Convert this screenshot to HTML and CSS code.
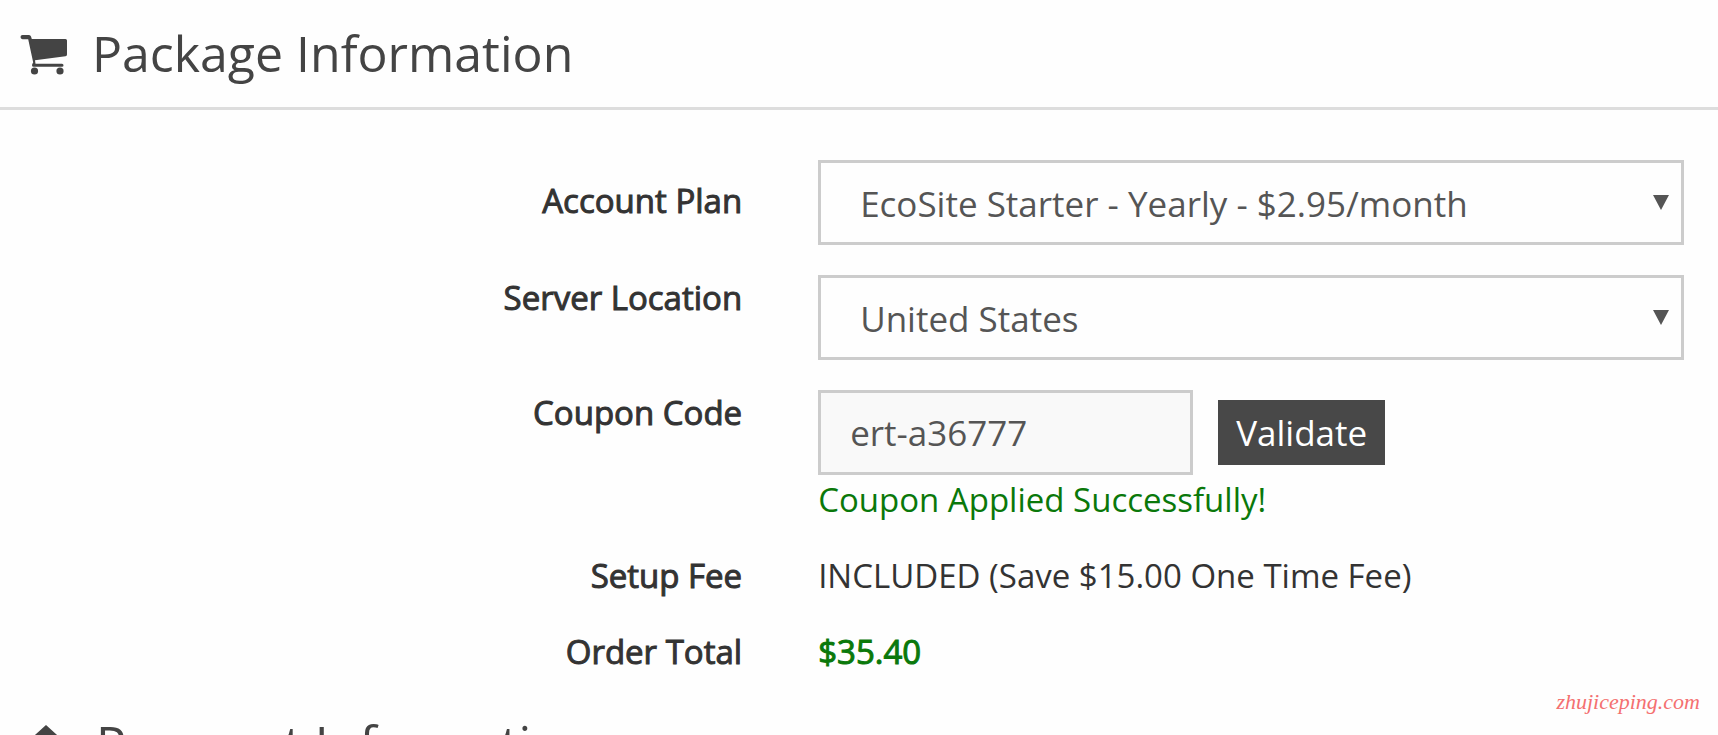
FILE: index.html
```
<!DOCTYPE html>
<html lang="en">
<head>
<meta charset="utf-8">
<title>Package Information</title>
<link rel="stylesheet" href="styles.css">
</head>
<body>
<section>
  <h2 class="heading heading-first">
    <svg class="heading-icon" viewBox="0 0 48 40" aria-hidden="true">
      <path d="M2.500 0H9Q10.500 0 11 1.500L11.800 4H45.500Q47 4 47 5.500V19.500Q47 21 45.500 21.200L15 25.200L15.500 28.700H42Q43.500 28.700 43.500 30.200T42 31.800H13.500Q12 31.800 12 30.300Q12 29 13.200 27.500L8.200 4.200H2.500Q.5 4.200 .5 2.100T2.500 0Z"/>
      <circle cx="14.500" cy="36" r="3.600"/><circle cx="40" cy="36" r="3.600"/>
    </svg>
    Package Information
  </h2>
  <form class="form" onsubmit="return false">
    <div class="row">
      <label class="label label-first" for="plan">Account Plan</label>
      <div class="select-wrap">
        <select class="field" id="plan"><option>EcoSite Starter - Yearly - $2.95/month</option></select>
        <svg class="arrow" viewBox="0 0 16 15" aria-hidden="true"><path d="M0 0H16L8 15Z"/></svg>
      </div>
    </div>
    <div class="row">
      <label class="label" for="location">Server Location</label>
      <div class="select-wrap">
        <select class="field" id="location"><option>United States</option></select>
        <svg class="arrow" viewBox="0 0 16 15" aria-hidden="true"><path d="M0 0H16L8 15Z"/></svg>
      </div>
    </div>
    <div class="row">
      <label class="label" for="coupon">Coupon Code</label>
      <div>
        <div class="coupon">
          <input class="field coupon-input" id="coupon" type="text" value="ert-a36777">
          <button class="button" type="button">Validate</button>
        </div>
        <p class="message">Coupon Applied Successfully!</p>
      </div>
    </div>
    <div class="row">
      <span class="label">Setup Fee</span>
      <span>INCLUDED (Save $15.00 One Time Fee)</span>
    </div>
    <div class="row">
      <span class="label">Order Total</span>
      <output class="total">$35.40</output>
    </div>
  </form>
</section>
<section>
  <h2 class="heading heading-next">
    <svg class="heading-icon" viewBox="0 0 48 40" aria-hidden="true">
      <path d="M26 0L47 19H41V40H30V27H22V40H11V19H5Z"/>
    </svg>
    Payment Information
  </h2>
</section>
<div class="watermark">zhujiceping.com</div>
</body>
</html>
```
FILE: styles.css
```
* { box-sizing: border-box; }
html { overflow: hidden; }
body {
  margin: 0;
  height: 100vh;
  overflow: hidden;
  background: #fefefe;
  color: #333;
  font: 33px/46px "Open Sans", sans-serif;
}
.heading {
  display: flex;
  align-items: center;
  gap: 24px;
  margin: 0;
  padding: 19px 20px 20px;
  border-bottom: 3px solid #ddd;
  color: #444;
  font-size: 50px;
  line-height: 68px;
  font-weight: 400;
}
.heading-next { padding: 34px 20px 20px; gap: 28px; }
.heading-icon { width: 48px; height: 40px; fill: #444; margin-top: 4px; }
.form {
  display: grid;
  gap: 30px;
  padding: 50px 34px 0 0;
}
.row {
  display: grid;
  grid-template-columns: minmax(0, 6fr) minmax(0, 7fr);
  column-gap: 76px;
}
.label { text-align: right; -webkit-text-stroke: 1px currentColor; }
.label-first { padding-top: 18px; }
.select-wrap { position: relative; }
.field {
  display: block;
  width: 100%;
  height: 85px;
  margin: 0;
  padding: 2px 39px 0;
  border: 3px solid #ccc;
  border-radius: 0;
  background: #fefefe;
  color: #555;
  font: 35px/48px "Open Sans", sans-serif;
  appearance: none;
}
.arrow {
  position: absolute;
  top: 35px;
  right: 15px;
  width: 16px;
  height: 15px;
  fill: #555;
  pointer-events: none;
}
.coupon { display: flex; align-items: center; gap: 25px; }
.coupon-input { width: 375px; padding: 0 29px; background: #f9f9f9; }
.button {
  height: 65px;
  padding: 0 18px;
  border: 0;
  background: #484848;
  color: #fff;
  font: 35px/48px "Open Sans", sans-serif;
}
.message { margin: 2px 0 0; color: #0a780a; }
.total { color: #0a780a; -webkit-text-stroke: 1px currentColor; }
.watermark {
  position: absolute;
  right: 18px;
  bottom: 21px;
  color: #f47070;
  font: italic 22px/24px "Liberation Serif", serif;
}
```
